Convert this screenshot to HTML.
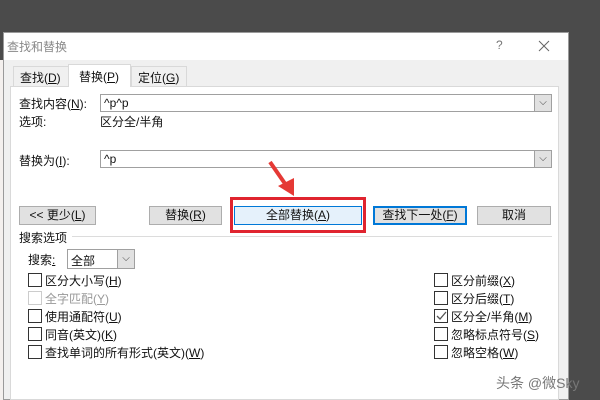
<!DOCTYPE html>
<html><head><meta charset="utf-8"><style>
*{margin:0;padding:0;box-sizing:border-box}
body{width:600px;height:400px;overflow:hidden;background:#4b4b4b;position:relative;font-family:"Liberation Sans","Noto Sans CJK SC",sans-serif;font-size:12px;color:#111}
.a{position:absolute;white-space:nowrap}
.dlg{position:absolute;left:3px;top:32px;width:566px;height:368px;background:#f0f0f0;border:1px solid #9a9a9a}
.cb{position:absolute;width:14px;height:14px;border:1px solid #333;background:#fff}
.btn{position:absolute;height:19px;border:1px solid #adadad;background:#e1e1e1;text-align:center;line-height:17px}
.combo{position:absolute;height:18px;border:1px solid #a0a0a0;background:#fff}
.dd{position:absolute;right:0;top:0;width:17px;height:16px;background:#e1e1e1;border-left:1px solid #a0a0a0;text-align:center;font-size:10px;line-height:16px;color:#444}
</style></head><body>
<div class="a" style="left:0;top:60px;width:10px;height:340px;background:#f4f0ee"></div>
<div class="dlg"></div>
<div class="a" style="left:4px;top:33px;width:564px;height:27px;background:#fff"></div>
<div class="a" style="left:7px;top:38px;color:#888">查找和替换</div>
<div class="a" style="left:496px;top:38px;color:#777">?</div>
<svg class="a" style="left:538px;top:40px" width="12" height="12"><path d="M1 1 L11 11 M11 1 L1 11" stroke="#666" stroke-width="1"/></svg>
<div class="a" style="left:10px;top:86px;width:549px;height:314px;background:#fff;border:1px solid #d9d9d9"></div>
<div class="a" style="left:13px;top:66px;width:56px;height:20px;border:1px solid #d9d9d9;border-bottom:0;background:#f0f0f0;padding:2px 0 0 6px">查找(<u>D</u>)</div>
<div class="a" style="left:68px;top:64px;width:63px;height:23px;border:1px solid #d9d9d9;border-bottom:0;background:#fff;padding:3px 0 0 10px">替换(<u>P</u>)</div>
<div class="a" style="left:131px;top:66px;width:56px;height:20px;border:1px solid #d9d9d9;border-bottom:0;background:#f0f0f0;padding:2px 0 0 6px">定位(<u>G</u>)</div>
<div class="a" style="left:19px;top:95px">查找内容(<u>N</u>):</div>
<div class="combo" style="left:100px;top:94px;width:452px"><span class="a" style="left:3px;top:1px">^p^p</span><div class="dd">⌵</div></div>
<div class="a" style="left:19px;top:113px">选项:</div>
<div class="a" style="left:100px;top:113px">区分全/半角</div>
<div class="a" style="left:19px;top:152px">替换为(<u>I</u>):</div>
<div class="combo" style="left:100px;top:150px;width:452px"><span class="a" style="left:3px;top:1px">^p</span><div class="dd">⌵</div></div>
<svg class="a" style="left:262px;top:158px" width="36" height="42"><line x1="8" y1="4" x2="26" y2="30" stroke="#e53935" stroke-width="4"/><polygon points="16,28 32,38 32,20" fill="#e53935"/></svg>
<div class="btn" style="left:19px;top:206px;width:77px">&lt;&lt; 更少(<u>L</u>)</div>
<div class="btn" style="left:149px;top:206px;width:73px">替换(<u>R</u>)</div>
<div class="a" style="left:230px;top:197px;width:136px;height:36px;border:3px solid #e0242f"></div>
<div class="btn" style="left:234px;top:206px;width:128px;background:#e5f1fb;border-color:#0078d7">全部替换(<u>A</u>)</div>
<div class="btn" style="left:373px;top:206px;width:94px;border:2px solid #0078d7;line-height:15px">查找下一处(<u>F</u>)</div>
<div class="btn" style="left:477px;top:206px;width:74px">取消</div>
<div class="a" style="left:19px;top:229px">搜索选项</div>
<div class="a" style="left:72px;top:236px;width:480px;height:1px;background:#dcdcdc"></div>
<div class="a" style="left:28px;top:251px">搜索<u>:</u></div>
<div class="combo" style="left:67px;top:249px;width:68px;height:20px"><span class="a" style="left:3px;top:2px">全部</span><div class="dd" style="height:18px;line-height:18px">⌵</div></div>
<div class="cb" style="left:28px;top:273px"></div><div class="a" style="left:45px;top:272px">区分大小写(<u>H</u>)</div>
<div class="cb" style="left:28px;top:291px;border-color:#ccc"></div><div class="a" style="left:45px;top:290px;color:#999">全字匹配(<u>Y</u>)</div>
<div class="cb" style="left:28px;top:309px"></div><div class="a" style="left:45px;top:308px">使用通配符(<u>U</u>)</div>
<div class="cb" style="left:28px;top:327px"></div><div class="a" style="left:45px;top:326px">同音(英文)(<u>K</u>)</div>
<div class="cb" style="left:28px;top:345px"></div><div class="a" style="left:45px;top:344px">查找单词的所有形式(英文)(<u>W</u>)</div>
<div class="cb" style="left:434px;top:273px"></div><div class="a" style="left:451px;top:272px">区分前缀(<u>X</u>)</div>
<div class="cb" style="left:434px;top:291px"></div><div class="a" style="left:451px;top:290px">区分后缀(<u>T</u>)</div>
<div class="cb" style="left:434px;top:309px"><svg width="12" height="12" style="position:absolute;left:0;top:0"><path d="M2 6 L5 9 L11 2" stroke="#555" stroke-width="1.3" fill="none"/></svg></div><div class="a" style="left:451px;top:308px">区分全/半角(<u>M</u>)</div>
<div class="cb" style="left:434px;top:327px"></div><div class="a" style="left:451px;top:326px">忽略标点符号(<u>S</u>)</div>
<div class="cb" style="left:434px;top:345px"></div><div class="a" style="left:451px;top:344px">忽略空格(<u>W</u>)</div>
<div class="a" style="left:496px;top:373px;color:#777;font-size:14px">头条 @微Sky</div>
</body></html>
